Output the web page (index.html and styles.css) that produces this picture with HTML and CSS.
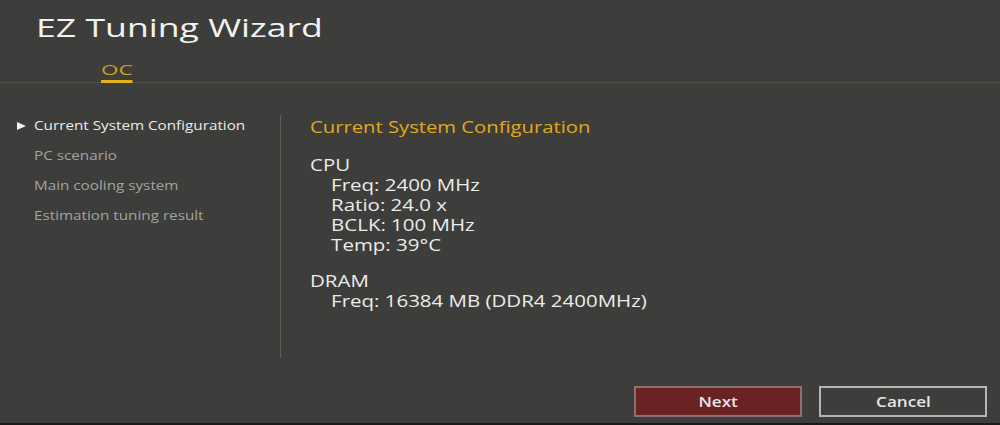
FILE: index.html
```html
<!DOCTYPE html>
<html lang="en">
<head>
    <meta charset="UTF-8">
    <title>EZ Tuning Wizard</title>
    <link rel="stylesheet" href="styles.css">
</head>
<body>
    <div id="wizard">
        <div class="header">
            <h1 class="titulo">EZ Tuning Wizard</h1>
            <div class="abas">
                <span class="aba ativa">OC</span>
            </div>
        </div>
        <div class="corpo">
            <ul class="passos">
                <li class="passo atual"><span>Current System Configuration</span></li>
                <li class="passo"><span>PC scenario</span></li>
                <li class="passo"><span>Main cooling system</span></li>
                <li class="passo"><span>Estimation tuning result</span></li>
            </ul>
            <div class="conteudo">
                <h2 class="subtitulo">Current System Configuration</h2>
                <div class="dados">
                    <div class="grupo">
                        <div class="grupo-nome">CPU</div>
                        <div class="item">Freq: 2400 MHz</div>
                        <div class="item">Ratio: 24.0 x</div>
                        <div class="item">BCLK: 100 MHz</div>
                        <div class="item">Temp: 39°C</div>
                    </div>
                    <div class="grupo">
                        <div class="grupo-nome">DRAM</div>
                        <div class="item">Freq: 16384 MB (DDR4 2400MHz)</div>
                    </div>
                </div>
            </div>
        </div>
        <div class="rodape">
            <button class="botao proximo"><span>Next</span></button>
            <button class="botao cancelar"><span>Cancel</span></button>
        </div>
    </div>
</body>
</html>
```

FILE: styles.css
```css
body{
    margin: 0;
    background-color: #1a1a1a;
    font-family: "Open Sans", "Noto Sans", sans-serif;
    overflow: hidden;
}
#wizard {
    width: 1000px;
    height: 423px;
    background-color: #3d3d3b;
    display: flex;
    flex-direction: column;
    overflow: hidden;
}
/* o texto da tela original e mais largo, por isso o scaleX */
.header{
    height: 83px;
    border-bottom: 1px solid #4f4f4c;
    box-sizing: border-box;
    padding-left: 36px;
}
.titulo{
    width: fit-content;
    margin: 0;
    padding-top: 7px;
    font-size: 26px;
    font-weight: normal;
    color: #f2f2f2;
    line-height: 40px;
    transform: scaleX(1.37);
    transform-origin: left center;
}
.abas{
    display: flex;
    padding-left: 65px;
    margin-top: 13px;
}
.aba{
    display: inline-block;
    font-size: 15px;
    line-height: 19px;
    color: #c9a11f;
    padding-bottom: 1px;
    border-bottom: 3px solid #e2b11b;
    transform: scaleX(1.5);
    transform-origin: left center;
}
.corpo{
    display: flex;
    height: 275px;
    padding-top: 28px;
    box-sizing: border-box;
}
.passos{
    list-style: none;
    margin: 0;
    padding: 0 0 0 34px;
    width: 246px;
    box-sizing: border-box;
}
.passo{
    position: relative;
    font-size: 12.6px;
    line-height: 30px;
    color: #a3a3a0;
}
.passo span{
    display: inline-block;
    transform: scaleX(1.21);
    transform-origin: left center;
}
.passo.atual{
    color: #ececea;
}
.passo.atual::before{
    content: "";
    position: absolute;
    left: -17px;
    top: 11px;
    border-left: 9px solid #f0f0f0;
    border-top: 4px solid transparent;
    border-bottom: 4px solid transparent;
}
.conteudo{
    margin-left: 34px;
    margin-top: 4px;
    border-left: 1px solid #5f5f5c;
    padding-left: 29px;
    height: 243px;
}
.subtitulo{
    width: fit-content;
    margin: 0 0 16px 0;
    font-size: 17px;
    font-weight: normal;
    color: #e3a91b;
    line-height: 24px;
    transform: scaleX(1.19);
    transform-origin: left center;
}
.dados{
    width: fit-content;
    transform: scaleX(1.32);
    transform-origin: left center;
}
.grupo{
    margin-bottom: 16px;
    color: #ececea;
}
.grupo-nome{
    font-size: 15.5px;
    line-height: 20px;
}
.item{
    font-size: 15.5px;
    line-height: 20px;
    padding-left: 16px;
}
.rodape{
    flex: 1;
    display: flex;
    justify-content: flex-end;
    align-items: flex-start;
    padding: 28px 13px 0 0;
    gap: 17px;
}
.botao{
    width: 168px;
    height: 31px;
    font-family: "Open Sans", "Noto Sans", sans-serif;
    font-size: 14px;
    font-weight: 600;
    color: #e6e6e6;
    cursor: pointer;
    border-radius: 0;
}
.botao span{
    display: inline-block;
    transform: scaleX(1.22);
}
.proximo{
    background-color: #6a2322;
    border: 2px solid #8a7270;
}
.cancelar{
    background-color: #3d3d3b;
    border: 2px solid #b5b5b3;
}
```
